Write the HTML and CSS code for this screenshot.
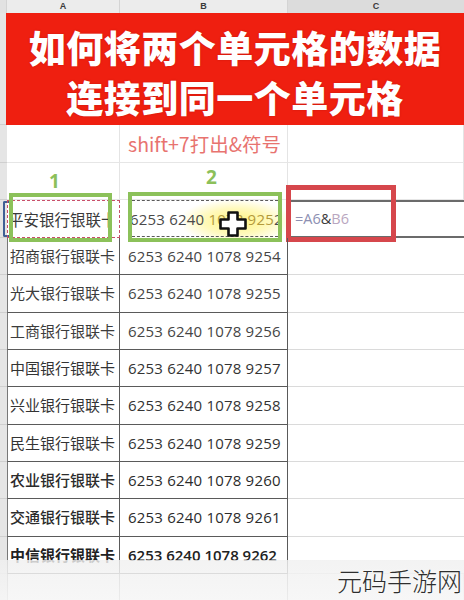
FILE: index.html
```html
<!DOCTYPE html>
<html lang="zh">
<head>
<meta charset="utf-8">
<link rel="stylesheet" href="styles.css">
</head>
<body>
<div class="sheet">
  <div class="row colhead">
    <div class="ch corner"></div>
    <div class="ch">A</div>
    <div class="ch">B</div>
    <div class="ch chc">C</div>
  </div>

  <div class="banner-row">
    <div class="rh rh-banner"></div>
    <div class="banner">
      <div>如何将两个单元格的数据</div>
      <div>连接到同一个单元格</div>
    </div>
  </div>

  <div class="row blank r4">
    <div class="rh"></div>
    <div class="cell a"></div>
    <div class="cell b"><span class="hint">shift+7打出&amp;符号</span></div>
    <div class="cell c"></div>
  </div>

  <div class="row blank r5">
    <div class="rh"></div>
    <div class="cell a"><span class="num-label l1">1</span></div>
    <div class="cell b"><span class="num-label l2">2</span></div>
    <div class="cell c"></div>
  </div>

  <div class="row r6">
    <div class="rh rh-sel"></div>
    <div class="cell a a6">
      <div class="ants ants-red"></div>
      <div class="clip clip-a"><span>平安银行银联卡</span></div>
      <div class="gbox gbox-a"></div>
    </div>
    <div class="cell b b6">
      <div class="glow"></div>
      <div class="clip clip-b"><span>6253 6240 <em>1078 925</em>2</span></div>
      <div class="ants ants-dark"></div>
      <div class="gbox gbox-b"></div>
      <svg class="cursor" width="28" height="26" viewBox="0 0 28 26">
        <polygon points="9.5,1.5 18.5,1.5 18.5,8.5 26.5,8.5 26.5,17.5 18.5,17.5 18.5,24.5 9.5,24.5 9.5,17.5 1.5,17.5 1.5,8.5 9.5,8.5" fill="#fff" stroke="#111" stroke-width="2.6" stroke-linejoin="round"/>
      </svg>
    </div>
    <div class="cell c c6">
      <span class="formula"><span class="fa">=A6</span><span class="famp">&amp;</span><span class="fb">B6</span></span>
      <div class="rbox"></div>
    </div>
  </div>

  <div class="row data w1"><div class="rh"></div><div class="cell a">招商银行银联卡</div><div class="cell b">6253 6240 1078 9254</div><div class="cell c"></div></div>
  <div class="row data w1"><div class="rh"></div><div class="cell a">光大银行银联卡</div><div class="cell b">6253 6240 1078 9255</div><div class="cell c"></div></div>
  <div class="row data w1"><div class="rh"></div><div class="cell a">工商银行银联卡</div><div class="cell b">6253 6240 1078 9256</div><div class="cell c"></div></div>
  <div class="row data w2"><div class="rh"></div><div class="cell a">中国银行银联卡</div><div class="cell b">6253 6240 1078 9257</div><div class="cell c"></div></div>
  <div class="row data w2"><div class="rh"></div><div class="cell a">兴业银行银联卡</div><div class="cell b">6253 6240 1078 9258</div><div class="cell c"></div></div>
  <div class="row data w2"><div class="rh"></div><div class="cell a">民生银行银联卡</div><div class="cell b">6253 6240 1078 9259</div><div class="cell c"></div></div>
  <div class="row data w3"><div class="rh"></div><div class="cell a">农业银行银联卡</div><div class="cell b">6253 6240 1078 9260</div><div class="cell c"></div></div>
  <div class="row data w3"><div class="rh"></div><div class="cell a">交通银行银联卡</div><div class="cell b">6253 6240 1078 9261</div><div class="cell c"></div></div>
  <div class="row data w4"><div class="rh"></div><div class="cell a">中信银行银联卡</div><div class="cell b">6253 6240 1078 9262</div><div class="cell c"></div></div>

  <div class="row blank tail">
    <div class="rh"></div>
    <div class="cell a"></div>
    <div class="cell b"></div>
    <div class="cell c"></div>
  </div>

  <div class="fade"></div>
  <div class="watermark">元码手游网</div>
</div>
</body>
</html>
```

FILE: styles.css
```css
* { box-sizing: border-box; }

html, body {
  margin: 0;
  padding: 0;
  background: #fff;
}

.sheet {
  position: relative;
  width: 464px;
  height: 600px;
  overflow: hidden;
  background: #fff;
  font-family: "Noto Sans CJK SC", "Noto Sans", sans-serif;
}

.row {
  display: grid;
  grid-template-columns: 7px 113px 168px 1fr;
}

/* column header */
.colhead {
  height: 13px;
  background: #ececec;
  font: bold 9px/13px "Liberation Sans", Arial, sans-serif;
  color: #3a3a3a;
}
.ch {
  text-align: center;
  border-right: 1px solid #d4d4d4;
  border-bottom: 1px solid #d8d8d8;
}
.ch.corner { background: #e2e2e2; }
.ch.chc { background: #dcdcdc; border-right: none; }

/* banner */
.banner-row {
  display: grid;
  grid-template-columns: 6px 1fr;
  height: 112px;
}
.rh-banner {
  background: #e4e4e4;
}
.banner {
  background: #ef1f10;
  color: #fff;
  font-weight: 900;
  font-size: 37px;
  line-height: 50px;
  text-align: center;
  padding-top: 9px;
  text-shadow: 0 0 2px rgba(120, 0, 0, 0.35);
  letter-spacing: 0.5px;
}

/* row header cells */
.rh {
  background: #e5e5e5;
  border-bottom: 1px solid #cfcfcf;
  position: relative;
}

/* blank rows */
.blank .cell {
  border-right: 1px solid #e4e4e4;
  border-bottom: 1px solid #e6e6e6;
}
.r4 { height: 38px; }
.r5 { height: 37px; }

.cell { position: relative; }

.hint {
  display: block;
  white-space: nowrap;
  padding: 6px 0 0 8px;
  font-size: 19.5px;
  line-height: 26px;
  color: #e8736f;
}

.num-label {
  display: block;
  color: #8cc05a;
  font: 700 19px/1 "Open Sans", "Noto Sans", sans-serif;
}
.l1 { padding: 9px 0 0 42px; }
.l2 { padding: 5px 0 0 86px; }

/* row 6 */
.r6 { height: 38px; }
.rh-sel::after {
  content: "";
  position: absolute;
  left: 3px;
  top: 1px;
  bottom: 0;
  width: 4px;
  border: 2px solid #3f5f95;
  border-right: none;
  border-radius: 2px 0 0 2px;
}

.ants {
  position: absolute;
}
.ants-red {
  inset: 0 0 0 0;
  border: 1.5px dashed #c9506a;
}
.ants-dark {
  left: 12px;
  right: 10px;
  top: 0;
  bottom: 1px;
  border-top: 1.5px dashed #5a5a5a;
  border-bottom: 1.5px dashed #5a5a5a;
}

.gbox {
  position: absolute;
  border: 4px solid #8cc15a;
}
.gbox-a {
  left: 2px;
  top: -7px;
  width: 103px;
  height: 49px;
}
.gbox-b {
  left: 8px;
  top: -8px;
  width: 154px;
  height: 50px;
}

.clip {
  position: absolute;
  top: 0;
  bottom: 0;
  overflow: hidden;
  white-space: nowrap;
  line-height: 38px;
}
.clip-a {
  left: 6px;
  width: 98px;
  font-size: 15.5px;
  color: #3a3a3a;
}
.clip-a span { margin-left: -5px; }
.clip-b {
  left: 12px;
  width: 146px;
  font: 15px/38px "Open Sans", "Noto Sans", sans-serif;
  color: #4a4a4a;
}
.clip-b span { margin-left: -2px; letter-spacing: 0.2px; }
.clip-b em {
  font-style: normal;
  color: #b39a3c;
}

.glow {
  position: absolute;
  left: 64px;
  top: 1px;
  width: 104px;
  height: 37px;
  background: radial-gradient(ellipse at 50% 55%, rgba(255, 243, 120, 0.95) 0%, rgba(255, 247, 160, 0.7) 45%, rgba(255, 255, 255, 0) 78%);
}

.cursor {
  position: absolute;
  left: 99px;
  top: 11px;
}

.c6 {
  border-top: 2px solid #6b6b6b;
  border-bottom: 2px solid #6b6b6b;
  border-left: 1.5px solid #6b6b6b;
}
.formula {
  position: absolute;
  left: 6px;
  top: 0;
  font: 14.5px/34px "Open Sans", "Noto Sans", sans-serif;
  white-space: nowrap;
}
.fa { color: #8d8fb2; }
.famp { color: #3a3a3a; }
.fb { color: #b9a6c0; }

.rbox {
  position: absolute;
  left: -3px;
  top: -17px;
  width: 110px;
  height: 57px;
  border: 5px solid #d6474c;
}

/* data rows */
.data { height: 37.33px; }
.data .cell {
  line-height: 36px;
  white-space: nowrap;
  overflow: hidden;
}
.data .a {
  border-left: 1.5px solid #777;
  border-right: 1.5px solid #5a5a5a;
  border-bottom: 1.5px solid #5a5a5a;
  padding-left: 2px;
  font-size: 15px;
  color: #3c3c3c;
}
.data .b {
  border-right: 1.5px solid #5a5a5a;
  border-bottom: 1.5px solid #5a5a5a;
  padding-left: 8px;
  font: 15px/36px "Open Sans", "Noto Sans", sans-serif;
  letter-spacing: 0.2px;
  color: #454545;
}
.data .c {
  border-bottom: 1px solid #dadada;
}

.w2 .a, .w2 .b { color: #333; }
.w3 .a, .w3 .b { color: #2b2b2b; font-weight: 500; }
.w4 .a { color: #222; font-weight: 700; }
.w4 .b { color: #222; font-weight: 600; letter-spacing: 0; }

.tail { height: 40px; }
.tail .a { border-left: 1.5px solid #999; border-right: 1.5px solid #888; }
.tail .b { border-right: 1.5px solid #888; }

.fade {
  position: absolute;
  left: 0;
  right: 0;
  top: 560px;
  bottom: 0;
  background: linear-gradient(rgba(240, 240, 240, 0.82), rgba(246, 246, 246, 0.9));
}

.watermark {
  position: absolute;
  left: 337px;
  top: 564px;
  font-size: 25px;
  font-weight: 300;
  line-height: 32px;
  color: #2e2e2e;
  white-space: nowrap;
  text-shadow: 0 0 3px #fff;
}
```
